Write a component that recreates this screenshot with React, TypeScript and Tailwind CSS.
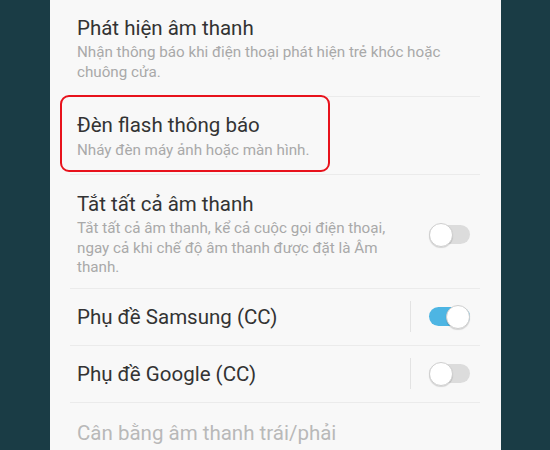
import React from "react";

function Toggle({ on }: { on: boolean }) {
  return (
    <div className="relative w-[41px] h-[24px] flex items-center">
      <div
        className={`w-full h-[19px] rounded-full ${
          on ? "bg-[#4db5e3]" : "bg-[#dcdcdc]"
        }`}
      />
      <div
        className={`absolute top-0 w-[24px] h-[24px] rounded-full bg-white border border-[#cfcfcf] shadow-[0_1px_1px_rgba(0,0,0,0.15)] ${
          on ? "right-0" : "left-0"
        }`}
      />
    </div>
  );
}

export default function App() {
  return (
    <div
      className="w-[550px] h-[450px] overflow-hidden bg-[#1a3c45] flex"
      style={{ fontFamily: "Roboto, 'Noto Sans', sans-serif" }}
    >
      <div className="relative ml-[50px] w-[451px] h-full bg-[#f8f8f8] pl-[20px] pr-[21px]">
        {/* Phát hiện âm thanh */}
        <div className="pl-[7px] pt-[16px] pb-[14px] border-b border-[#ebebeb]">
          <div className="text-[20.5px] leading-[24px] text-[#333333]">
            Phát hiện âm thanh
          </div>
          <div className="text-[15.2px] leading-[20px] mt-[2px] text-[#a9a9a9]">
            Nhận thông báo khi điện thoại phát hiện trẻ khóc hoặc
            <br />
            chuông cửa.
          </div>
        </div>

        {/* Đèn flash thông báo */}
        <div className="pl-[7px] pt-[16px] pb-[14px] border-b border-[#ebebeb]">
          <div className="text-[20.5px] leading-[24px] text-[#333333]">
            Đèn flash thông báo
          </div>
          <div className="text-[15.2px] leading-[20px] mt-[3px] text-[#a9a9a9]">
            Nháy đèn máy ảnh hoặc màn hình.
          </div>
        </div>

        {/* Tắt tất cả âm thanh */}
        <div className="pl-[7px] pr-[10px] pt-[17px] pb-[10px] border-b border-[#ebebeb] flex items-center">
          <div className="flex-1">
            <div className="text-[20.5px] leading-[24px] text-[#333333]">
              Tắt tất cả âm thanh
            </div>
            <div className="text-[15.2px] leading-[19.5px] mt-[3px] text-[#a9a9a9]">
              Tắt tất cả âm thanh, kể cả cuộc gọi điện thoại,
              <br />
              ngay cả khi chế độ âm thanh được đặt là Âm
              <br />
              thanh.
            </div>
          </div>
          <Toggle on={false} />
        </div>

        {/* Phụ đề Samsung */}
        <div className="pl-[7px] pr-[10px] h-[57px] border-b border-[#ebebeb] flex items-center">
          <div className="flex-1 text-[20.5px] leading-[24px] text-[#333333]">
            Phụ đề Samsung (CC)
          </div>
          <div className="w-px h-[31px] bg-[#e3e3e3] mr-[18px]" />
          <Toggle on={true} />
        </div>

        {/* Phụ đề Google */}
        <div className="pl-[7px] pr-[10px] h-[57px] border-b border-[#ebebeb] flex items-center">
          <div className="flex-1 text-[20.5px] leading-[24px] text-[#333333]">
            Phụ đề Google (CC)
          </div>
          <div className="w-px h-[31px] bg-[#e3e3e3] mr-[18px]" />
          <Toggle on={false} />
        </div>

        {/* Cân bằng âm thanh */}
        <div className="pl-[7px] pt-[18px]">
          <div className="text-[20.5px] leading-[24px] text-[#b9b9b9]">
            Cân bằng âm thanh trái/phải
          </div>
          <div className="text-[15.2px] leading-[20px] mt-[3px] text-[#cfcfcf]">
            Điều chỉnh cân bằng âm thanh cho thiết bị được kết nối.
          </div>
        </div>

        {/* highlight annotation */}
        <div className="absolute left-[10px] top-[95px] w-[270px] h-[77px] border-2 border-[#e8121c] rounded-[9px]" />
      </div>
    </div>
  );
}
